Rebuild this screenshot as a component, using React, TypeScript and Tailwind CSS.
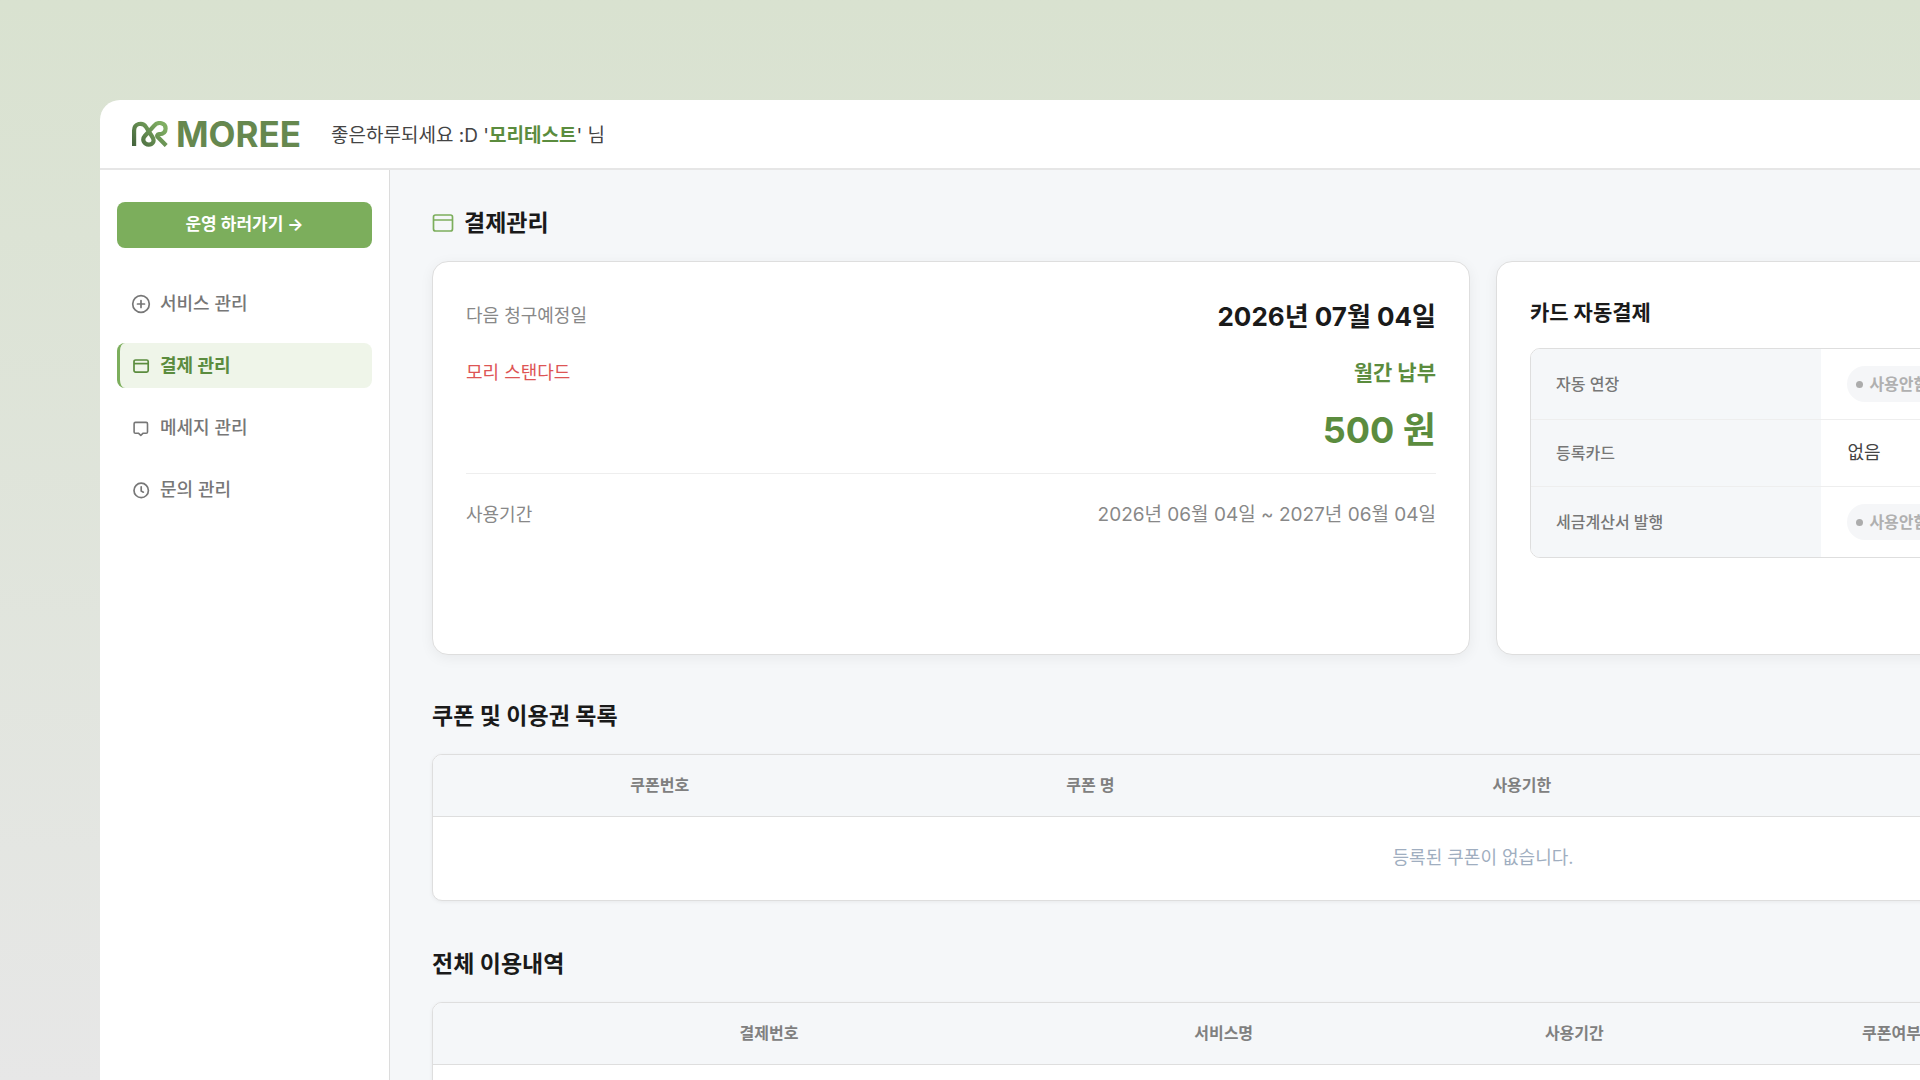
import type { ReactNode } from "react";

const menus = [
  { label: "서비스 관리", icon: <PlusCircleIcon />, active: false },
  { label: "결제 관리", icon: <CardIcon />, active: true },
  { label: "메세지 관리", icon: <MessageIcon />, active: false },
  { label: "문의 관리", icon: <ClockIcon />, active: false },
];

const couponColumns = [
  { label: "쿠폰번호", width: "w-[21.6%]" },
  { label: "쿠폰 명", width: "w-[19.4%]" },
  { label: "사용기한", width: "w-[21.7%]" },
  { label: "등록일", width: "w-[18.6%]" },
  { label: "상태", width: "w-[18.7%]" },
];

const historyColumns = [
  { label: "결제번호", width: "w-[32%]" },
  { label: "서비스명", width: "w-[11.3%]" },
  { label: "사용기간", width: "w-[22.1%]" },
  { label: "쿠폰여부", width: "w-[8.1%]" },
  { label: "결제금액", width: "w-[13.2%]" },
  { label: "결제일", width: "w-[13.3%]" },
];

function PlusCircleIcon() {
  return (
    <svg viewBox="0 0 20 20" className="h-5 w-5" fill="none" stroke="currentColor" strokeWidth="1.7" strokeLinecap="round">
      <circle cx="10" cy="10" r="8.3" />
      <path d="M10 6.5v7M6.5 10h7" />
    </svg>
  );
}

function CardIcon() {
  return (
    <svg viewBox="0 0 20 20" className="h-5 w-5" fill="none" stroke="currentColor" strokeWidth="1.7">
      <rect x="3" y="4" width="14.2" height="12.2" rx="1.6" />
      <path d="M3 7.6h14.2" />
    </svg>
  );
}

function MessageIcon() {
  return (
    <svg viewBox="0 0 20 20" className="h-5 w-5" fill="none" stroke="currentColor" strokeWidth="1.6" strokeLinejoin="round">
      <path d="M4.4 4.4h10.800a1.300 1.300 0 0 1 1.300 1.300v8.200a1.300 1.300 0 0 1-1.300 1.300h-3L9.800 17.400 7.400 15.200h-3a1.300 1.300 0 0 1-1.300-1.300V5.700a1.300 1.300 0 0 1 1.300-1.300Z" />
    </svg>
  );
}

function ClockIcon() {
  return (
    <svg viewBox="0 0 20 20" className="h-5 w-5" fill="none" stroke="currentColor" strokeWidth="1.7" strokeLinecap="round" strokeLinejoin="round">
      <circle cx="10.2" cy="10.4" r="7.2" />
      <path d="M10.2 6.800v4.200l2.200 1.200" />
    </svg>
  );
}

function Logo() {
  return (
    <a href="#" className="flex items-center gap-2 text-[#66884f]">
      <svg viewBox="0 0 36 26" className="h-[26px] w-9" fill="none" strokeWidth="4.2" aria-hidden="true">
        <defs>
          <linearGradient id="mark" x1="0" y1="26" x2="26" y2="0" gradientUnits="userSpaceOnUse">
            <stop offset="0" stopColor="#41603a" />
            <stop offset="1" stopColor="#7fae62" />
          </linearGradient>
        </defs>
        <path
          stroke="url(#mark)"
          d="M2.1 25V9.600C2.100 2.400 10.600.6 14 6l6.400 10c3 4.800-.4 7.600-3.600 7.600-4.800 0-7.200-5-4-8.600L22 4.800c4.400-5 11.600-2.600 11.600 2.600 0 3.800-3 5.600-6.600 5.800-1.800.1-2.400 1.600-1.200 2.900l8.400 8.500"
        />
      </svg>
      <span className="text-[35px] leading-10 font-bold">MOREE</span>
    </a>
  );
}

function DataTable({ columns, children }: { columns: { label: string; width: string }[]; children: ReactNode }) {
  return (
    <div className="overflow-hidden rounded-[10px] border border-[#dedede] bg-white shadow-[0_1px_4px_rgba(0,0,0,0.06)]">
      <table className="w-full table-fixed text-center">
        <thead>
          <tr className="border-b border-[#dedede] bg-[#f5f7f9]">
            {columns.map((column) => (
              <th key={column.label} scope="col" className={`h-[61px] text-base font-semibold text-[#808080] ${column.width}`}>
                {column.label}
              </th>
            ))}
          </tr>
        </thead>
        <tbody>{children}</tbody>
      </table>
    </div>
  );
}

function SettingRow({ label, children }: { label: string; children: ReactNode }) {
  return (
    <tr className="border-b border-[#eeeeee] last:border-b-0">
      <th scope="row" className="w-[30%] bg-[#f5f7f9] px-[25px] text-base font-medium text-[#777777]">
        {label}
      </th>
      <td className="px-[26px] py-[17px] text-lg text-[#444444]">{children}</td>
    </tr>
  );
}

function OffBadge() {
  return (
    <span className="flex h-9 w-fit items-center gap-[6px] rounded-full bg-[#f5f6f8] px-[9px] text-base font-semibold text-[#b0b0b0]">
      <span className="h-[7px] w-[7px] rounded-full bg-[#acacac]" />
      사용안함
    </span>
  );
}

export default function App() {
  return (
    <div className="flex h-screen overflow-hidden bg-linear-to-b from-[#d9e2d0] to-[#e7e7e7] pt-[100px] pl-[100px] font-['Inter','Noto_Sans_CJK_KR',sans-serif]">
      {/* the window runs past the right and bottom edges */}
      <div className="-mr-[656px] flex flex-1 flex-col overflow-hidden rounded-tl-[20px] bg-white">
        <header className="flex h-[70px] shrink-0 items-center gap-[30px] border-b-2 border-[#e6e6e6] px-8">
          <Logo />
          <p className="pt-1 text-[19px] text-[#444444]">
            좋은하루되세요 :D '<strong className="font-bold text-[#5b8c3e]">모리테스트</strong>' 님
          </p>
        </header>

        <div className="flex min-h-0 flex-1">
          <aside className="w-[290px] shrink-0 border-r border-[#dcdcdc] px-[17px] pt-8">
            <button type="button" className="h-[46px] w-full rounded-lg bg-[#7cae5c] text-[17px] font-bold text-white">
              운영 하러가기 →
            </button>
            <nav className="mt-[33px] flex flex-col gap-[17px]">
              {menus.map((menu) => (
                <a
                  key={menu.label}
                  href="#"
                  className={
                    menu.active
                      ? "flex h-[45px] items-center gap-[9px] rounded-lg border-l-3 border-[#7cae5c] bg-[#eff5e9] pl-[11px] text-lg font-bold text-[#5b8c3e]"
                      : "flex h-[45px] items-center gap-[9px] rounded-lg border-l-3 border-transparent pl-[11px] text-lg font-medium text-[#777777]"
                  }
                >
                  {menu.icon}
                  {menu.label}
                </a>
              ))}
            </nav>
          </aside>

          <main className="min-w-0 flex-1 bg-[#f5f7f9] px-[42px] pt-9">
            <h1 className="mb-[21px] flex items-center gap-[10px] text-[23px] leading-[34px] font-bold text-[#1a1a1a]">
              <svg viewBox="0 0 22 22" className="h-[22px] w-[22px] text-[#7cae5c]" fill="none" stroke="currentColor" strokeWidth="1.7">
                <rect x="1.5" y="3" width="19" height="16" rx="2" />
                <path d="M1.5 8h19" />
              </svg>
              결제관리
            </h1>

            <div className="grid grid-cols-2 gap-[26px]">
              <section className="h-[394px] rounded-2xl border border-[#dedede] bg-white px-[33px] py-[31px] shadow-[0_3px_14px_rgba(0,0,0,0.06)]">
                <div className="flex h-[46px] items-center justify-between">
                  <span className="text-lg text-[#888888]">다음 청구예정일</span>
                  <span className="text-[26px] font-bold text-[#1a1a1a]">2026년 07월 04일</span>
                </div>
                <div className="mt-3 flex h-11 items-center justify-between">
                  <span className="text-lg text-[#dd5555]">모리 스탠다드</span>
                  <span className="text-[21px] font-bold text-[#5b8c3e]">월간 납부</span>
                </div>
                <div className="mt-[6px] border-b border-[#eeeeee] pb-[14px] text-right text-4xl leading-[58px] font-bold text-[#5b8c3e]">
                  500 원
                </div>
                <div className="mt-[26px] flex h-[30px] items-center justify-between text-[#888888]">
                  <span className="text-lg">사용기간</span>
                  <span className="text-[19px]">2026년 06월 04일 ~ 2027년 06월 04일</span>
                </div>
              </section>

              <section className="h-[394px] rounded-2xl border border-[#dedede] bg-white px-[33px] pt-[34px] shadow-[0_3px_14px_rgba(0,0,0,0.06)]">
                <h2 className="mb-[18px] text-[21px] leading-[34px] font-bold text-[#1a1a1a]">카드 자동결제</h2>
                <div className="overflow-hidden rounded-[10px] border border-[#dedede]">
                  <table className="w-full table-fixed text-left">
                    <tbody>
                      <SettingRow label="자동 연장">
                        <OffBadge />
                      </SettingRow>
                      <SettingRow label="등록카드">
                        <span className="block leading-8">없음</span>
                      </SettingRow>
                      <SettingRow label="세금계산서 발행">
                        <OffBadge />
                      </SettingRow>
                    </tbody>
                  </table>
                </div>
              </section>
            </div>

            <section className="mt-11">
              <h2 className="mb-[21px] text-[23px] leading-[34px] font-bold text-[#1a1a1a]">쿠폰 및 이용권 목록</h2>
              <DataTable columns={couponColumns}>
                <tr>
                  <td colSpan={couponColumns.length} className="h-[84px] text-lg text-[#a0aec0]">
                    등록된 쿠폰이 없습니다.
                  </td>
                </tr>
              </DataTable>
            </section>

            <section className="mt-[46px]">
              <h2 className="mb-[21px] text-[23px] leading-[34px] font-bold text-[#1a1a1a]">전체 이용내역</h2>
              <DataTable columns={historyColumns}>
                <tr>
                  <td colSpan={historyColumns.length} className="h-[84px]" />
                </tr>
              </DataTable>
            </section>
          </main>
        </div>
      </div>
    </div>
  );
}
